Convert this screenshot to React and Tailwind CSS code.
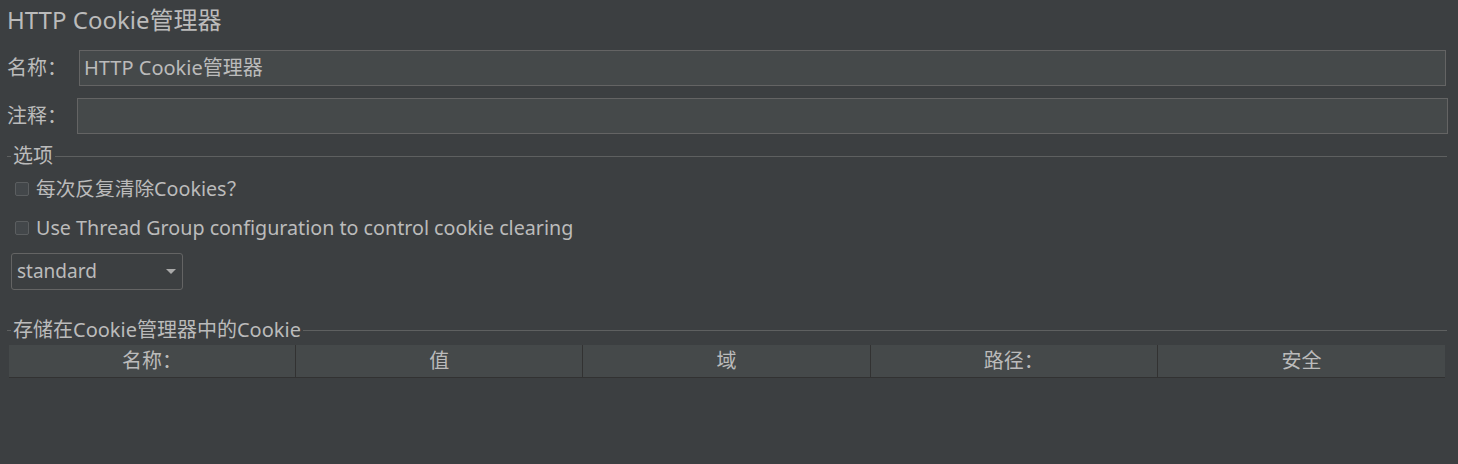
const font = { fontFamily: '"Noto Sans", "Noto Sans CJK SC", sans-serif' };

function Checkbox({ label }) {
  return (
    <div className="flex h-[39px] items-center">
      <span className="ml-[15px] h-[14px] w-[14px] rounded-[2px] border border-[#5b5e60] bg-[#43474a]" />
      <span className="ml-[7px] text-[19.7px] text-[#bbbbbb]">{label}</span>
    </div>
  );
}

function Legend({ title }) {
  return (
    <div className="flex items-center">
      <div className="ml-[7px] h-px w-[4px] bg-[#5e6060]" />
      <span className="px-[2px] text-[20px] leading-none text-[#bbbbbb]">{title}</span>
      <div className="mr-[11px] h-px flex-1 bg-[#5e6060]" />
    </div>
  );
}

export default function App() {
  const cols = ["名称：", "值", "域", "路径：", "安全"];
  return (
    <div className="h-[464px] w-[1458px] overflow-hidden bg-[#3c3f41] text-[#bbbbbb]" style={font}>
      <div className="pl-[7px] pt-[4px] text-[24px] leading-[32px]">HTTP Cookie管理器</div>

      <div className="mt-[14px] flex items-center">
        <span className="w-[79px] pl-[7px] text-[20px]">名称：</span>
        <div className="mr-[12px] flex h-[36px] flex-1 items-center border border-[#646464] bg-[#45494a] pl-[4px] text-[20px]">
          HTTP Cookie管理器
        </div>
      </div>

      <div className="mt-[12px] flex items-center">
        <span className="w-[77px] pl-[7px] text-[20px]">注释：</span>
        <div className="mr-[10px] h-[36px] flex-1 border border-[#646464] bg-[#45494a]" />
      </div>

      <div className="mt-[12px]">
        <Legend title="选项" />
      </div>
      <div className="mt-[3px]">
        <Checkbox label="每次反复清除Cookies？" />
        <Checkbox label="Use Thread Group configuration to control cookie clearing" />
      </div>

      <div className="ml-[11px] mt-[6px] flex h-[37px] w-[172px] items-center justify-between rounded-[3px] border border-[#646464] pl-[5px] pr-[6px] text-[19px]">
        <span>standard</span>
        <svg width="10" height="5" viewBox="0 0 10 5">
          <path d="M0 0h10L5 5z" fill="#a9a9a9" />
        </svg>
      </div>

      <div className="mt-[30px]">
        <Legend title="存储在Cookie管理器中的Cookie" />
      </div>

      <div className="ml-[9px] mr-[13px] mt-[5px] grid h-[33px] grid-cols-5 border-b border-[#323232] bg-[#45494a] text-[20px]">
        {cols.map((c, i) => (
          <div
            key={c}
            className={`flex items-center justify-center ${i < 4 ? "border-r border-[#323232]" : ""}`}
          >
            {c}
          </div>
        ))}
      </div>
    </div>
  );
}
